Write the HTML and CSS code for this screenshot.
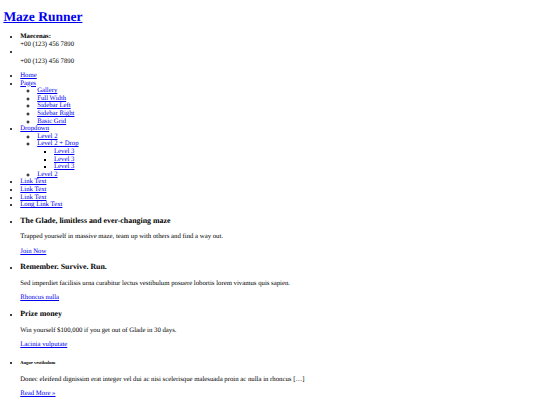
FILE: index.html
```html
<!DOCTYPE html>
<html lang="en" class="page">
<head>
<meta charset="utf-8">
<title>Maze Runner</title>
<link rel="stylesheet" href="styles.css">
</head>
<body class="site">
<header class="site-header">
  <h1 class="logo"><a href="#">Maze Runner</a></h1>
  <ul class="contact">
    <li><strong>Maecenas:</strong><br>+00 (123) 456 7890</li>
    <li><span class="icon"></span><br>+00 (123) 456 7890</li>
  </ul>
  <ul class="nav">
    <li><a href="#">Home</a></li>
    <li><a href="#">Pages</a>
      <ul>
        <li><a href="#">Gallery</a></li>
        <li><a href="#">Full Width</a></li>
        <li><a href="#">Sidebar Left</a></li>
        <li><a href="#">Sidebar Right</a></li>
        <li><a href="#">Basic Grid</a></li>
      </ul>
    </li>
    <li><a href="#">Dropdown</a>
      <ul>
        <li><a href="#">Level 2</a></li>
        <li><a href="#">Level 2 + Drop</a>
          <ul>
            <li><a href="#">Level 3</a></li>
            <li><a href="#">Level 3</a></li>
            <li><a href="#">Level 3</a></li>
          </ul>
        </li>
        <li><a href="#">Level 2</a></li>
      </ul>
    </li>
    <li><a href="#">Link Text</a></li>
    <li><a href="#">Link Text</a></li>
    <li><a href="#">Link Text</a></li>
    <li><a href="#">Long Link Text</a></li>
  </ul>
</header>
<ul class="features">
  <li>
    <h3>The Glade, limitless and ever-changing maze</h3>
    <p>Trapped yourself in massive maze, team up with others and find a way out.</p>
    <p><a href="#">Join Now</a></p>
  </li>
  <li>
    <h3>Remember. Survive. Run.</h3>
    <p>Sed imperdiet facilisis urna curabitur lectus vestibulum posuere lobortis lorem vivamus quis sapien.</p>
    <p><a href="#">Rhoncus nulla</a></p>
  </li>
  <li>
    <h3>Prize money</h3>
    <p>Win yourself $100,000 if you get out of Glade in 30 days.</p>
    <p><a href="#">Lacinia vulputate</a></p>
  </li>
</ul>
<ul class="posts">
  <li>
    <h6>Augue vestibulum</h6>
    <p>Donec eleifend dignissim erat integer vel dui ac nisi scelerisque malesuada proin ac nulla in rhoncus [&hellip;]</p>
    <p><a href="#">Read More &raquo;</a></p>
  </li>
</ul>
</body>
</html>
```
FILE: styles.css
```css
.page {
  zoom: 0.421875;
  text-rendering: geometricPrecision;
}
.site {
  margin: 0 8px 8px;
  font-family: "Liberation Serif", "Times New Roman", serif;
  color: #000;
  line-height: 1.125;
  text-rendering: geometricPrecision;
}
.contact .icon {
  display: inline-block;
  width: 0;
  height: 22px;
  vertical-align: top;
}
.nav ul {
  list-style-type: circle;
}
.nav ul ul {
  list-style-type: square;
}
.posts {
  margin-top: 20px;
}
```
